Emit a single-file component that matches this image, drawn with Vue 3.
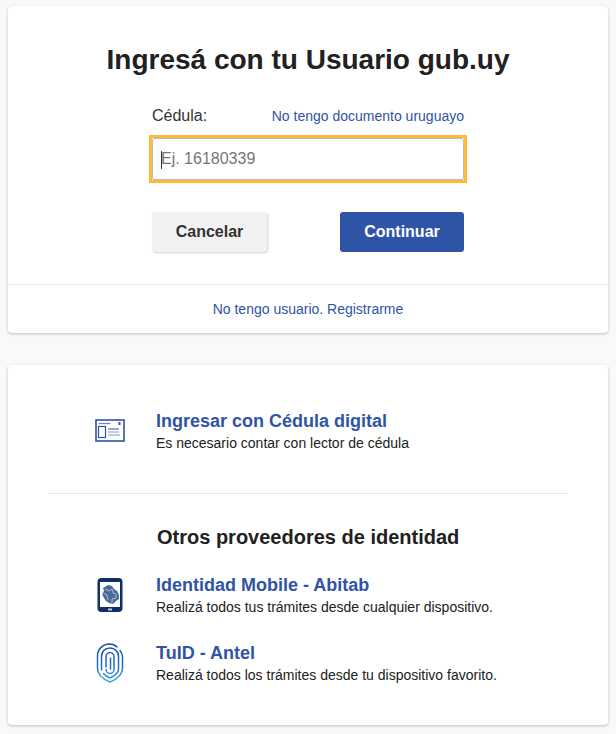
<template>
  <main class="page">
    <section class="card login">
      <h1 class="title">Ingresá con tu Usuario gub.uy</h1>
      <form class="form" @submit.prevent>
        <div class="label-row">
          <label class="label" for="doc">Cédula:</label>
          <a class="link" href="#">No tengo documento uruguayo</a>
        </div>
        <div class="field"><span class="caret"></span><input id="doc" class="input" placeholder="Ej. 16180339" /></div>
        <div class="actions">
          <button class="btn cancel" type="button">Cancelar</button>
          <button class="btn go" type="submit">Continuar</button>
        </div>
      </form>
      <div class="register"><a class="link" href="#">No tengo usuario. Registrarme</a></div>
    </section>

    <section class="card others">
      <a class="provider first" href="#">
        <span class="icon">
          <svg width="30" height="24" viewBox="0 0 30 24" fill="none" stroke="#2f54a5">
            <rect x="1" y="1" width="28" height="21" stroke-width="1.6" />
            <rect x="3.500" y="7.500" width="7" height="11" stroke-width="1.2" />
            <path d="M3.500 4.500h12" stroke-width="1.200" stroke-opacity="0.7" />
            <path d="M13 10h11" stroke-width="1" />
            <path d="M13 13h11M13 16h12" stroke-width="1" stroke-opacity="0.6" />
            <path d="M24.500 3v3" stroke-width="2" />
          </svg>
        </span>
        <span class="text">
          <strong class="name big">Ingresar con Cédula digital</strong>
          <span class="desc">Es necesario contar con lector de cédula</span>
        </span>
      </a>
      <hr class="rule" />
      <h2 class="subtitle">Otros proveedores de identidad</h2>
      <a class="provider mobile" href="#">
        <span class="icon">
          <svg width="26" height="36" viewBox="0 0 26 36">
            <rect x="0.500" y="1" width="25" height="34" rx="4" fill="#0f2f66" />
            <rect x="3" y="5" width="20" height="25" fill="#fff" />
            <path d="M6 11l5-3 4 1 2 3 3 2 2 4 0 4-3 2-3 3-4-1-3-2-2-3-2-4 2-3z" fill="#4a6a9c" />
            <path d="M8 12l4 2 3-2 1 4 3 1 0 4-4 1 0 4M6 16l4 2 1 5" stroke="#c2cfe0" stroke-width="0.800" fill="none" />
            <rect x="11" y="31.500" width="4" height="2" fill="#b9c6dc" />
          </svg>
        </span>
        <span class="text">
          <strong class="name">Identidad Mobile - Abitab</strong>
          <span class="desc">Realizá todos tus trámites desde cualquier dispositivo.</span>
        </span>
      </a>
      <a class="provider antel" href="#">
        <span class="icon">
          <svg width="28" height="40" viewBox="0 0 28 40" fill="none" stroke-linecap="round" stroke="url(#fp)" stroke-width="1.500">
            <defs>
              <linearGradient id="fp" gradientUnits="userSpaceOnUse" x1="0" y1="0" x2="0" y2="40">
                <stop offset="0" stop-color="#1d4fa5" />
                <stop offset="0.600" stop-color="#2270c8" />
                <stop offset="1" stop-color="#3fb0ee" />
              </linearGradient>
            </defs>
            <path d="M14 39C6.500 36 1.500 31 1.500 25V13C1.500 6 7 1 13.500 1c3 0 5.500 1 7.500 3" />
            <path d="M24 7.500c1.500 1.800 2.500 4 2.500 6.500V25c0 6-5 11-12.500 14" />
            <path d="M5.500 27V13.500C5.500 8.500 9 5 14 5c4.800 0 8.500 3.500 8.500 8.500V26c0 4-3 6.500-8.500 9-2.500-1-5-2.500-6.500-4.500" />
            <path d="M10 24V14c0-2.500 1.800-4.500 4-4.500s4 2 4 4.500v12.500c0 2.200-1.800 4-4 4s-4-1.800-4-4" />
            <path d="M14.500 15v11" />
          </svg>
        </span>
        <span class="text">
          <strong class="name">TuID - Antel</strong>
          <span class="desc">Realizá todos los trámites desde tu dispositivo favorito.</span>
        </span>
      </a>
    </section>
  </main>
</template>

<script setup>
</script>

<style>
html, body { background: #f9f9f9; }
</style>

<style scoped>
.page {
  height: 734px;
  box-sizing: border-box;
  overflow: hidden;
  padding: 6px 8px 0;
  display: flex;
  flex-direction: column;
  gap: 32px;
  font-family: "Liberation Sans", Arial, sans-serif;
  color: #212121;
}
.card {
  background: #fff;
  border-radius: 4px;
  box-shadow: 0 1px 3px rgba(0, 0, 0, 0.25);
}
.login { height: 327px; display: flex; flex-direction: column; align-items: center; }
.title { margin: 37px 0 0; font-size: 28px; line-height: 34px; font-weight: 700; color: #212121; }
.form { width: 312px; margin-top: 29px; }
.label-row { display: flex; justify-content: space-between; align-items: center; height: 20px; }
.label { font-size: 16px; color: #333; }
.link { color: #2f54a5; font-size: 14px; text-decoration: none; }
.field { position: relative; margin-top: 12px; outline: 3px solid #fdb93a; outline-offset: 0; }
.caret { position: absolute; left: 9px; top: 13px; width: 1px; height: 18px; background: #333; }
.input {
  display: block;
  width: 100%;
  height: 42px;
  box-sizing: border-box;
  border: 1px solid #bbb;
  border-radius: 2px;
  padding: 0 8px;
  font: 16px "Liberation Sans", Arial, sans-serif;
  outline: none;
  background: #fff;
}
.input::placeholder { color: #757575; opacity: 1; }
.actions { display: flex; justify-content: space-between; margin-top: 32px; }
.btn {
  height: 40px;
  border: 0;
  border-radius: 3px;
  font: 700 16px "Liberation Sans", Arial, sans-serif;
  padding: 0;
}
.cancel { width: 115px; background: #f2f2f2; color: #333; box-shadow: 1px 1px 2px rgba(0, 0, 0, 0.18); }
.go { width: 124px; background: #2f54a5; color: #fff; }
.register {
  align-self: stretch;
  margin-top: 32px;
  border-top: 1px solid #e8e8e8;
  height: 48px;
  display: flex;
  align-items: center;
  justify-content: center;
}
.others { height: 360px; display: flex; flex-direction: column; padding: 0 40px; }
.provider { display: flex; align-items: center; text-decoration: none; }
.icon { width: 108px; box-sizing: border-box; padding-left: 15px; flex: none; display: flex; justify-content: center; }
.text { display: flex; flex-direction: column; gap: 2px; }
.name { color: #2f54a5; font-size: 18px; line-height: 22px; }
.desc { color: #212121; font-size: 14px; line-height: 18px; }
.first { margin-top: 45px; }
.rule { width: 520px; margin: 41px 0 0; border: 0; border-top: 1px solid #e8e8e8; }
.subtitle { margin: 30px 0 0 109px; font-size: 20px; line-height: 26px; color: #212121; }
.mobile { margin-top: 24px; }
.antel { margin-top: 26px; }
</style>
